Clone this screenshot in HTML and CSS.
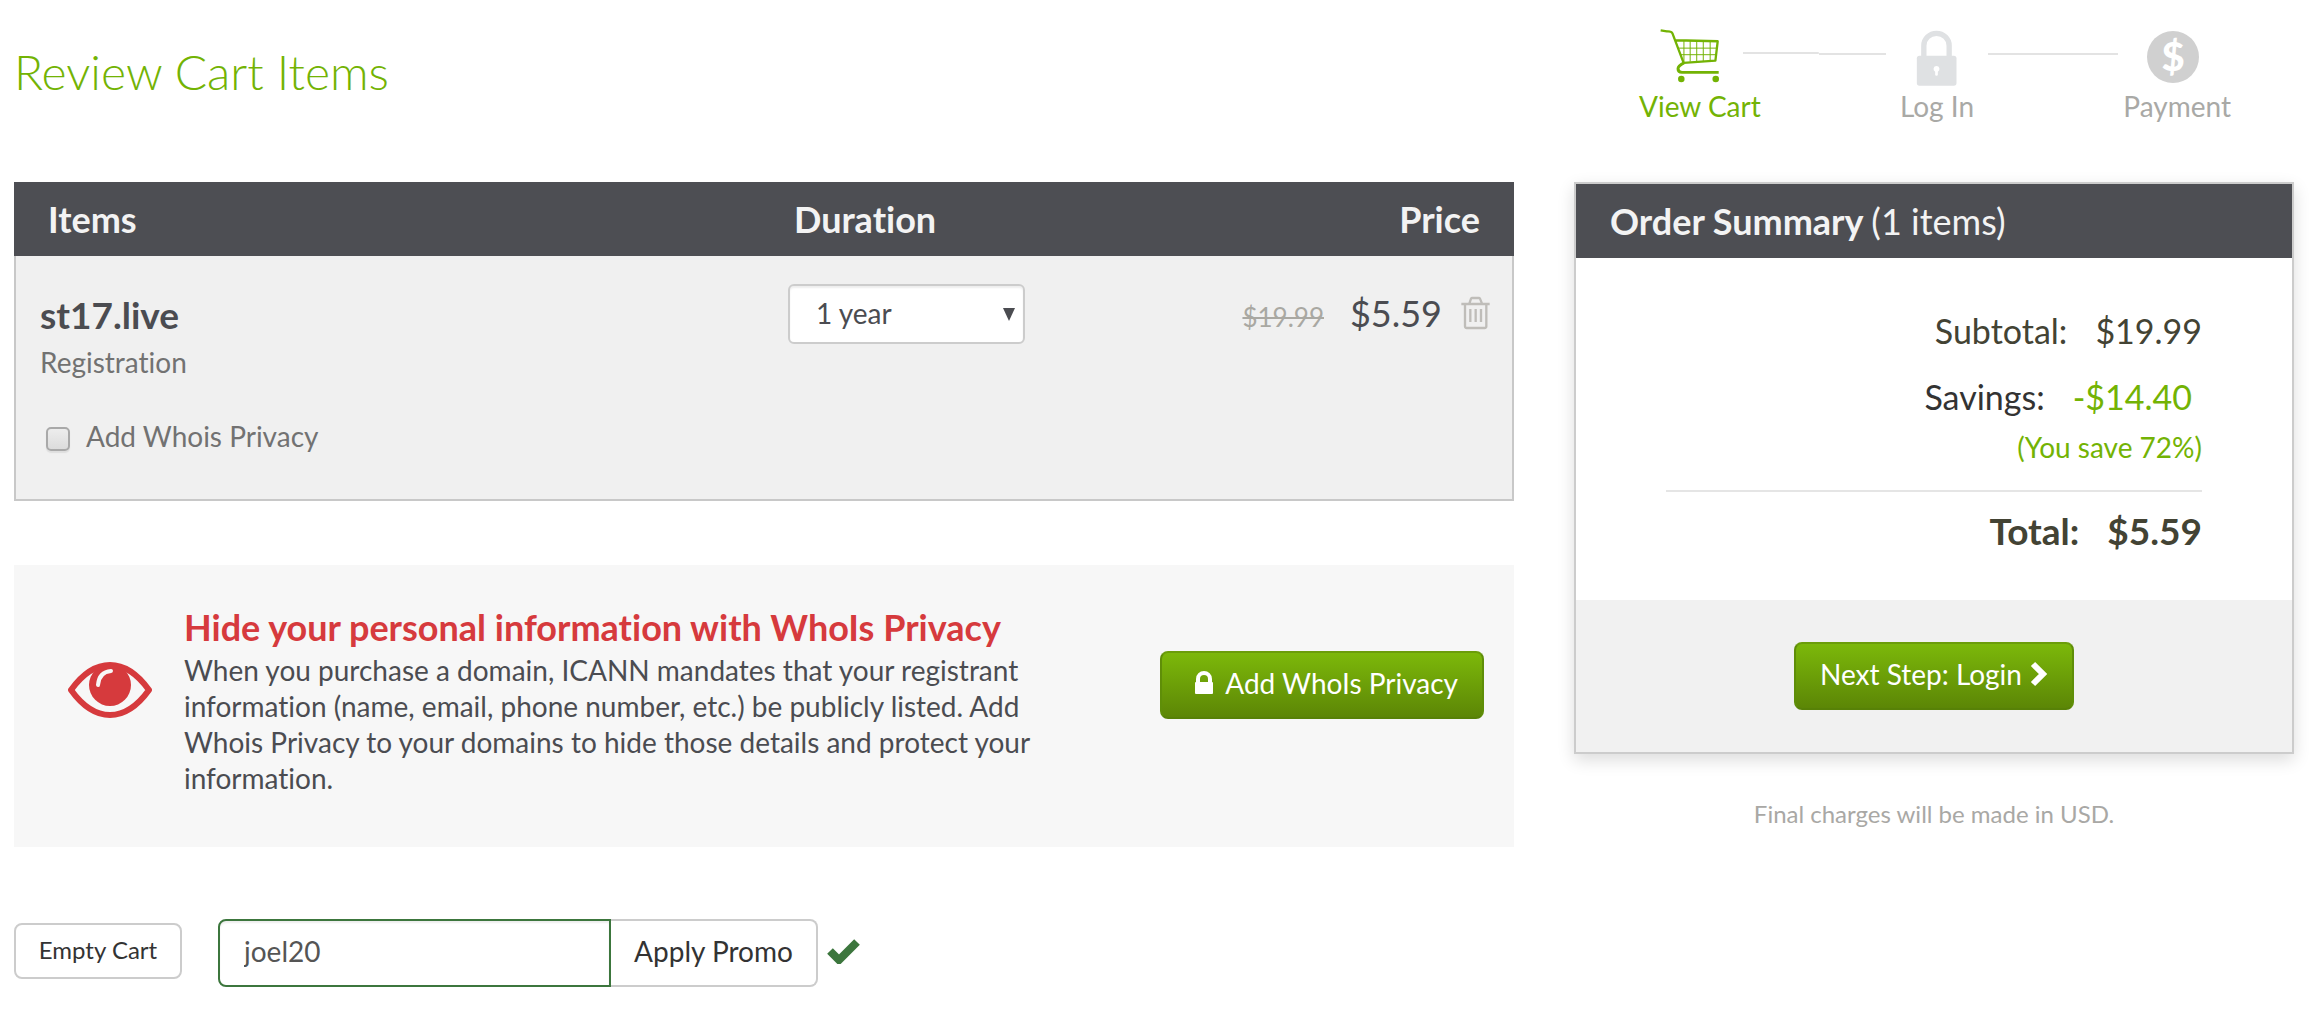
FILE: index.html
```html
<!DOCTYPE html>
<html lang="en">
<head>
<meta charset="utf-8">
<title>Review Cart Items</title>
<link rel="stylesheet" href="styles.css">
</head>
<body>
<div class="page">
  <header class="top">
    <h1 class="title">Review Cart Items</h1>
    <ol class="steps">
      <li class="step step-active">
        <span class="step-icon step-icon-cart">
          <svg width="60" height="54" viewBox="31 40 183 164" aria-hidden="true" fill="none" stroke="#73b304">
            <path d="M33 44 L52 47 Q66 46 69 53 L103 143 L200 136 L207 77 L79 74" stroke-width="7" stroke-linejoin="round"/>
            <path d="M104 76V140M123 76V139M143 76V138M163 76V137M184 76V136M87 98H204M94 118H202" stroke-width="3"/>
            <path d="M104 143 Q86 152 86 161 Q86 172 98 172 H210" stroke-width="9"/>
            <circle cx="96" cy="192" r="10" fill="#73b304" stroke="none"/>
            <circle cx="201" cy="192" r="10" fill="#73b304" stroke="none"/>
          </svg>
        </span>
        <span>View Cart</span>
      </li>
      <li class="connector connector-first" aria-hidden="true"></li>
      <li class="step">
        <span class="step-icon">
          <svg width="41" height="56" viewBox="804 42 122 168" aria-hidden="true">
            <path d="M827 122V89a38 37 0 0 1 76 0v33" fill="none" stroke="#dfe1e3" stroke-width="16"/>
            <rect x="806" y="119" width="119" height="90" rx="8" fill="#dfe1e3"/>
            <path d="M865 150a9 9 0 0 1 4 17v9q0 3-4 3t-4-3v-9a9 9 0 0 1 4-17z" fill="#fff"/>
          </svg>
        </span>
        <span>Log In</span>
      </li>
      <li class="connector connector-last" aria-hidden="true"></li>
      <li class="step">
        <span class="step-icon step-icon-pay"><span class="coin">$</span></span>
        <span>Payment</span>
      </li>
    </ol>
  </header>

  <main class="content">
    <section class="cart">
      <table class="items">
        <colgroup><col class="col-item"><col class="col-duration"><col></colgroup>
        <thead>
          <tr><th class="head-item">Items</th><th class="head-duration">Duration</th><th class="head-price">Price</th></tr>
        </thead>
        <tbody>
          <tr>
            <td class="cell-item">
              <div class="domain">st17.live</div>
              <div class="kind">Registration</div>
              <label class="privacy-option" for="whois"><input class="checkbox" id="whois" type="checkbox">Add Whois Privacy</label>
            </td>
            <td class="cell-duration">
              <div class="select-wrap">
                <select class="duration" aria-label="Duration"><option>1 year</option></select>
                <svg class="select-arrow" width="12" height="13" viewBox="0 0 12 13" aria-hidden="true"><path d="M0 0H12L6 13Z" fill="#4b4c51"/></svg>
              </div>
            </td>
            <td class="cell-price">
              <div class="price-line">
                <s class="old-price">$19.99</s>
                <span class="price">$5.59</span>
                <button class="remove" type="button" aria-label="Remove item">
                  <svg width="29" height="34" viewBox="95 36 87 102" aria-hidden="true" fill="none" stroke="#bfbdb9" stroke-width="7">
                    <path d="M96 60H181M120 59L125 44Q126 42 129 42H148Q151 42 152 44L158 59M107 62V127Q107 132 112 132H166Q171 132 171 127V62M123 75V114M139 75V114M155 75V114"/>
                  </svg>
                </button>
              </div>
            </td>
          </tr>
        </tbody>
      </table>

      <section class="promo">
        <svg class="eye" width="84" height="56" viewBox="0 0 84 56" aria-hidden="true">
          <path d="M3 28Q21 3 42 3T81 28Q63 53 42 53T3 28Z" fill="none" stroke="#d63a3d" stroke-width="6" stroke-linejoin="round"/>
          <circle cx="42" cy="23" r="21" fill="#d63a3d"/>
          <path d="M30 23Q31 10 43 9" fill="none" stroke="#f7f7f7" stroke-width="4" stroke-linecap="round"/>
        </svg>
        <div class="promo-text">
          <h2 class="promo-title">Hide your personal information with WhoIs Privacy</h2>
          <p class="promo-copy">When you purchase a domain, ICANN mandates that your registrant information (name, email, phone number, etc.) be publicly listed. Add Whois Privacy to your domains to hide those details and protect your information.</p>
        </div>
        <button class="btn-green btn-privacy" type="button">
          <svg width="20" height="24" viewBox="0 0 20 24" aria-hidden="true"><path d="M4 12V8a6 6 0 0 1 12 0v4" fill="none" stroke="#fff" stroke-width="4"/><rect x="1" y="11" width="18" height="12" rx="1" fill="#fff"/></svg>
          Add WhoIs Privacy
        </button>
      </section>

      <form class="actions">
        <button class="btn-plain" type="button">Empty Cart</button>
        <div class="coupon">
          <input class="coupon-input" type="text" aria-label="Promo code" value="joel20">
          <button class="coupon-apply" type="button">Apply Promo</button>
          <svg class="coupon-ok" width="33" height="26" viewBox="0 0 33 26" aria-hidden="true"><path d="M3 13L12 22L30 4" fill="none" stroke="#3c763d" stroke-width="8"/></svg>
        </div>
      </form>
    </section>

    <aside class="side">
      <section class="summary">
        <h2 class="summary-head">Order Summary <span class="summary-count">(1 items)</span></h2>
        <div class="summary-body">
          <div class="sum-row sum-subtotal"><span>Subtotal:</span><span>$19.99</span></div>
          <div class="sum-row sum-savings"><span>Savings:</span><span class="green">-$14.40</span></div>
          <div class="you-save">(You save 72%)</div>
          <div class="sum-row sum-total"><span>Total:</span><span>$5.59</span></div>
        </div>
        <div class="summary-foot">
          <button class="btn-green btn-next" type="button">Next Step: Login
            <svg width="18" height="26" viewBox="0 0 18 26" aria-hidden="true"><path d="M3 3L13 13L3 23" fill="none" stroke="#fff" stroke-width="6"/></svg>
          </button>
        </div>
      </section>
      <p class="note">Final charges will be made in USD.</p>
    </aside>
  </main>
</div>
</body>
</html>
```
FILE: styles.css
```css
* { box-sizing: border-box; }

body {
  margin: 0;
  background: #fff;
  color: #4b4c51;
  font: 28px/36px Lato, sans-serif;
  font-variant-ligatures: none;
}

h1, h2, p, ol { margin: 0; padding: 0; }

button, input, select { font: inherit; color: inherit; margin: 0; }

.page { padding: 28px 15px 36px 14px; }

.top, .content {
  display: grid;
  grid-template-columns: minmax(0, 25fr) minmax(0, 12fr);
  column-gap: 60px;
  align-items: start;
}

.top { margin-bottom: 58px; }

.title {
  padding-top: 14px;
  color: #73b304;
  font-size: 48px;
  font-weight: 300;
  line-height: 60px;
}

/* Checkout progress */
.steps {
  display: flex;
  list-style: none;
  padding: 0 63px 0 65px;
  color: #a9a9a6;
}
.step { display: flex; flex-direction: column; align-items: center; white-space: nowrap; }
.step-active { color: #73b304; }
.step-icon { display: flex; align-items: center; height: 60px; }
.step-icon-cart { padding-right: 20px; padding-bottom: 4px; }
.step-icon-pay { padding-right: 8px; padding-bottom: 2px; }
.coin {
  width: 52px;
  height: 52px;
  border-radius: 50%;
  background: #d0d0d0;
  color: #fff;
  font-size: 40px;
  font-weight: 900;
  line-height: 50px;
  text-align: center;
}
.connector { height: 3px; margin-top: 24px; }
.connector-first {
  flex: 145;
  margin-left: -18px;
  margin-right: 14px;
  background:
    linear-gradient(#e3e3e3, #e3e3e3) left top / 53% 2px no-repeat,
    linear-gradient(#e3e3e3, #e3e3e3) right bottom / 47% 2px no-repeat;
}
.connector-last {
  flex: 132;
  margin-left: 14px;
  margin-right: 5px;
  background: linear-gradient(#e3e3e3, #e3e3e3) left bottom / 100% 2px no-repeat;
}

/* Cart table */
.items {
  width: 100%;
  table-layout: fixed;
  border-collapse: separate;
  border-spacing: 0;
}
.col-item { width: 52%; }
.col-duration { width: 20%; }
.items th {
  height: 74px;
  padding: 0;
  background: #4d4e53;
  color: #f3f3f3;
  font-size: 36px;
  line-height: 44px;
  text-align: left;
}
.items .head-item { padding-left: 34px; }
.items .head-price { padding-right: 34px; text-align: right; }
.items td {
  padding: 0;
  background: #f0f0f0;
  border-bottom: 2px solid #c8c8c8;
  vertical-align: top;
}
.items .cell-item { padding: 34px 0 45px 24px; border-left: 2px solid #c8c8c8; }
.items .cell-duration { padding-top: 28px; }
.items .cell-price { padding: 35px 22px 0 0; border-right: 2px solid #c8c8c8; }
.domain { font-size: 37px; font-weight: 700; line-height: 50px; }
.kind { margin-top: 4px; color: #727272; }
.privacy-option {
  display: flex;
  align-items: center;
  gap: 16px;
  margin-top: 38px;
  padding-left: 6px;
  color: #727272;
}
.checkbox {
  appearance: none;
  width: 24px;
  height: 24px;
  margin-top: 6px;
  border: 2px solid #a9a9a9;
  border-radius: 5px;
  background: linear-gradient(#ededed, #dcdcdc);
  box-shadow: 0 2px 1px #dedede;
}
.select-wrap { position: relative; width: 237px; margin-left: -6px; }
.duration {
  appearance: none;
  display: block;
  width: 100%;
  height: 60px;
  padding: 0 28px 2px 26px;
  border: 2px solid #ccc;
  border-radius: 6px;
  background: #fff;
  box-shadow: inset 0 2px 2px rgba(0, 0, 0, .07);
}
.select-arrow { position: absolute; right: 10px; top: 24px; pointer-events: none; }
.price-line { display: flex; justify-content: flex-end; align-items: baseline; }
.old-price { color: #a9a8a2; font-size: 26px; }
.price { margin-left: 26px; font-size: 36px; line-height: 44px; }
.remove {
  align-self: center;
  display: block;
  margin-left: 19px;
  padding: 0;
  border: 0;
  background: none;
}
.remove svg { display: block; }

/* Privacy offer */
.promo {
  display: flex;
  align-items: center;
  margin-top: 64px;
  padding: 39px 30px 51px 54px;
  background: #f7f7f7;
}
.eye { flex: none; margin-bottom: 20px; }
.promo-text { flex: 0 1 860px; margin-left: 32px; }
.promo-title { color: #d63a3d; font-size: 36px; font-weight: 700; line-height: 46px; }
.promo-copy { margin-top: 2px; }

.btn-green {
  display: flex;
  align-items: center;
  justify-content: center;
  height: 68px;
  border: 2px solid #5c8a05;
  border-color: #6b9d0a #5f8e08 #578107;
  border-radius: 8px;
  background: linear-gradient(#7cb80a, #5c8606);
  color: #fff;
  white-space: nowrap;
}
.btn-privacy { flex: none; width: 324px; margin-left: auto; margin-bottom: 30px; padding: 0 24px 4px 32px; justify-content: space-between; }

/* Bottom actions */
.actions { display: flex; align-items: center; gap: 36px; margin-top: 72px; }
.btn-plain {
  width: 168px;
  height: 56px;
  margin-bottom: 4px;
  padding: 0 0 2px;
  border: 2px solid #ccc;
  border-radius: 8px;
  background: #fff;
  color: #333;
  font-size: 24px;
}
.coupon { display: flex; align-items: center; color: #333; }
.coupon-input {
  width: 393px;
  height: 68px;
  padding: 0 24px 4px;
  border: 2px solid #3c763d;
  border-radius: 8px 0 0 8px;
  background: #fff;
  box-shadow: inset 0 2px 2px rgba(0, 0, 0, .07);
  color: #555;
}
.coupon-apply {
  width: 207px;
  height: 68px;
  padding: 0 0 4px;
  border: 2px solid #ccc;
  border-left: 0;
  border-radius: 0 8px 8px 0;
  background: #fff;
}
.coupon-ok { margin-left: 9px; margin-bottom: 4px; }

/* Order summary */
.summary {
  border: 2px solid #ccc;
  background: #fff;
  box-shadow: 0 6px 16px rgba(0, 0, 0, .14);
}
.summary-head {
  padding: 15px 34px;
  background: #4d4e53;
  color: #f3f3f3;
  font-size: 36px;
  font-weight: 700;
  line-height: 44px;
}
.summary-count { font-weight: 400; }
.summary-body { padding: 51px 90px 47px; color: #434334; text-align: right; }
.sum-row { display: flex; justify-content: flex-end; gap: 28px; font-size: 34px; line-height: 44px; }
.sum-savings { margin-top: 22px; padding-right: 10px; color: #333; }
.green, .you-save { color: #73b304; }
.you-save { margin-top: 10px; }
.sum-total { margin-top: 25px; padding-top: 17px; border-top: 2px solid #e5e5e5; font-size: 37px; font-weight: 700; }
.summary-foot {
  display: flex;
  justify-content: center;
  padding: 42px 0;
  background: #f1f1f1;
}
.btn-next { width: 280px; gap: 8px; padding: 0 0 4px; }
.note { margin-top: 44px; color: #a9a8a5; font-size: 24px; line-height: 32px; text-align: center; }
```
